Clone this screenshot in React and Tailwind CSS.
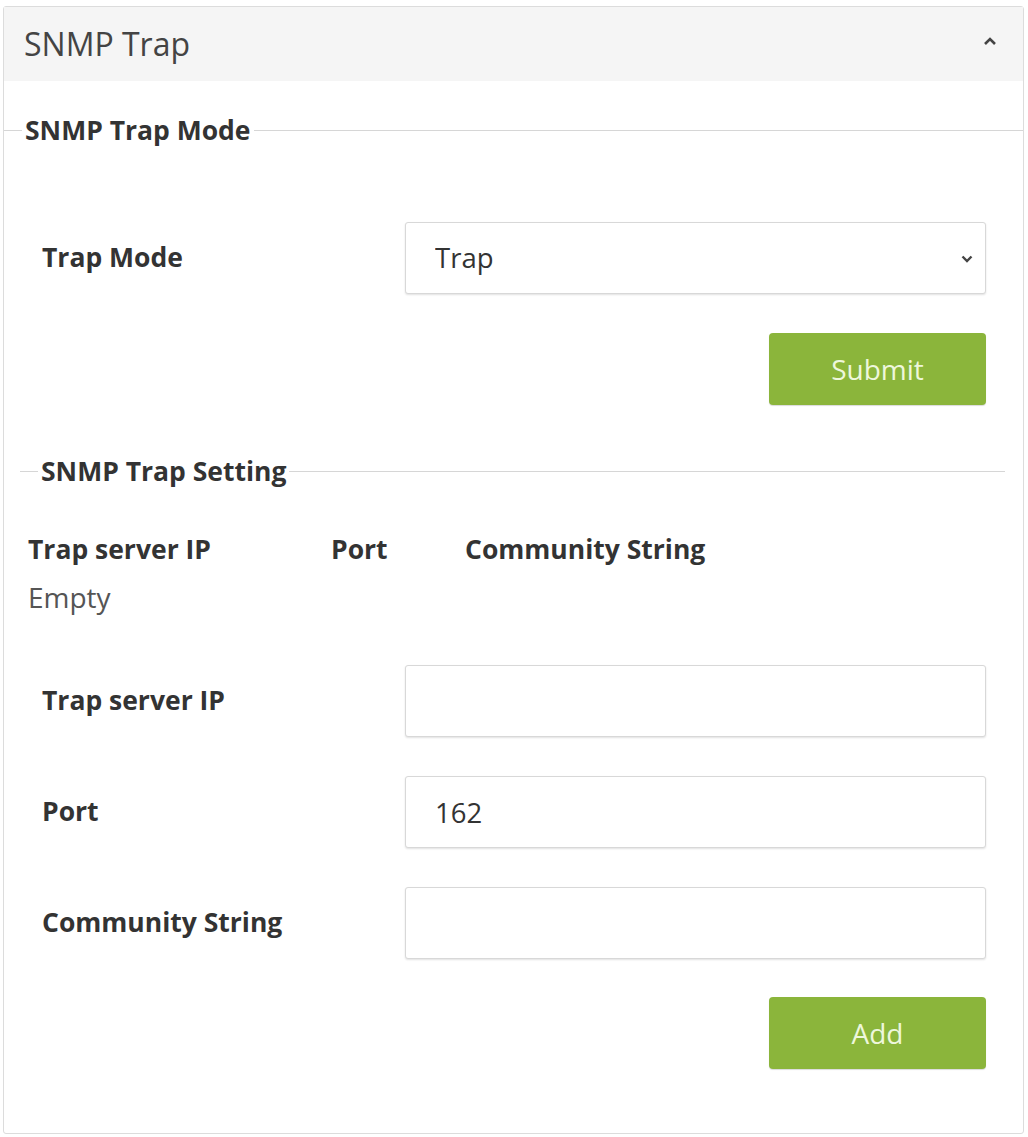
import { useState } from 'react';

const font = { fontFamily: '"Open Sans", "Liberation Sans", sans-serif' };

function Legend({ title, className = '' }) {
  return (
    <div className={`flex h-[30px] items-center ${className}`}>
      <span className="h-px w-[18px] bg-[#d6d6d6]" />
      <span className="px-[3px] text-[26.5px] font-bold leading-none text-[#333]">{title}</span>
      <span className="h-px flex-1 bg-[#d6d6d6]" />
    </div>
  );
}

function FieldRow({ label, children, className = '' }) {
  return (
    <div className={`flex h-[72px] items-center ${className}`}>
      <label className="w-[363px] shrink-0 text-[26.5px] font-bold text-[#333]">{label}</label>
      {children}
    </div>
  );
}

function GreenButton({ children, className = '' }) {
  return (
    <button
      type="button"
      className={`h-[72px] w-[217px] rounded-[4px] bg-[#8bb53b] text-[28px] text-[#eef7dc] shadow-[0_1px_1px_rgba(0,0,0,0.15)] ${className}`}
    >
      {children}
    </button>
  );
}

const inputCls =
  'h-[72px] flex-1 rounded-[3px] border border-[#d8d8d8] bg-white px-[29px] text-[27.5px] text-[#333] shadow-[0_1px_2px_rgba(0,0,0,0.12)] outline-none';

export default function App() {
  const [mode, setMode] = useState('trap');
  const [ip, setIp] = useState('');
  const [port, setPort] = useState('162');
  const [community, setCommunity] = useState('');

  return (
    <div className="min-h-[1137px] bg-white pt-[6px] pl-[3px]" style={font}>
      <div className="w-[1021px] rounded-[3px] border border-[#dcdcdc] bg-white">
        {/* panel header */}
        <div className="flex h-[74px] items-center justify-between bg-[#f5f5f5] pl-[20px] pr-[26px]">
          <h2 className="text-[32px] font-normal text-[#444]">SNMP Trap</h2>
          <svg width="14" height="10" viewBox="0 0 14 10" className="-mt-[6px]">
            <polyline points="2,8 7,3 12,8" fill="none" stroke="#444" strokeWidth="2.6" />
          </svg>
        </div>

        {/* trap mode */}
        <Legend title="SNMP Trap Mode" className="mt-[34px]" />
        <div className="flex flex-col pl-[38px] pr-[37px]">
          <FieldRow label="Trap Mode" className="mt-[77px]">
            <div className="relative flex-1">
              <select
                value={mode}
                onChange={(e) => setMode(e.target.value)}
                className={`${inputCls} w-full appearance-none`}
              >
                <option value="trap">Trap</option>
                <option value="inform">Inform</option>
              </select>
              <svg width="12" height="8" viewBox="0 0 12 8" className="pointer-events-none absolute right-[13px] top-[33px]">
                <polyline points="1.5,1.5 6,6 10.5,1.5" fill="none" stroke="#444" strokeWidth="2.4" />
              </svg>
            </div>
          </FieldRow>
          <GreenButton className="mt-[39px] self-end">Submit</GreenButton>
        </div>

        {/* trap setting */}
        <div className="mt-[51px] ml-[16px] mr-[18px]">
          <Legend title="SNMP Trap Setting" />
        </div>

        <div className="mt-[40px] pl-[24px]">
          <div className="flex h-[47px] items-center text-[26.5px] font-bold text-[#333]">
            <span className="w-[303px]">Trap server IP</span>
            <span className="w-[134px]">Port</span>
            <span>Community String</span>
          </div>
          <div className="flex h-[47px] items-center text-[28px] text-[#555]">Empty</div>
        </div>

        <div className="flex flex-col pl-[38px] pr-[37px] pb-[64px]">
          <FieldRow label="Trap server IP" className="mt-[45px]">
            <input value={ip} onChange={(e) => setIp(e.target.value)} className={inputCls} />
          </FieldRow>
          <FieldRow label="Port" className="mt-[39px]">
            <input value={port} onChange={(e) => setPort(e.target.value)} className={inputCls} />
          </FieldRow>
          <FieldRow label="Community String" className="mt-[39px]">
            <input value={community} onChange={(e) => setCommunity(e.target.value)} className={inputCls} />
          </FieldRow>
          <GreenButton className="mt-[38px] self-end">Add</GreenButton>
        </div>
      </div>
    </div>
  );
}
